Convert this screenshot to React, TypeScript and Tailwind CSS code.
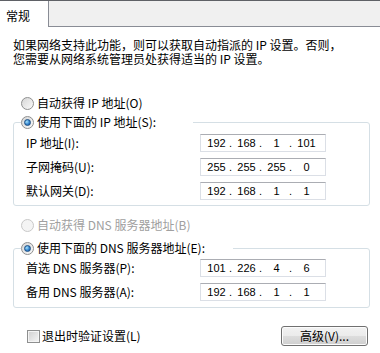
import { Fragment } from "react";

function Radio({ checked, disabled }: { checked?: boolean; disabled?: boolean }) {
  return (
    <span
      className={
        disabled
          ? "flex h-[13px] w-[13px] shrink-0 items-center justify-center rounded-full border border-[#c9c9c9] bg-[#f4f4f4]"
          : "flex h-[13px] w-[13px] shrink-0 items-center justify-center rounded-full border border-[#8e8f8f] bg-[linear-gradient(135deg,#d6d6d6,#fafafa)]"
      }
    >
      {checked && (
        <span className="h-[7px] w-[7px] rounded-full border border-[#1b4f85] bg-[radial-gradient(circle_at_35%_35%,#a6e3fb,#3585cf_55%,#1a5595)]" />
      )}
    </span>
  );
}

function IpBox({ parts }: { parts: string[] }) {
  return (
    <div className="flex h-[18px] w-[126px] items-center border border-[#dbdfe6] border-t-[#abadb3] bg-white pl-[3px] font-['Liberation_Sans',sans-serif] text-[11px] leading-none">
      {parts.map((p, i) => (
        <Fragment key={i}>
          {i > 0 && <span className="w-[5px]">.</span>}
          <span className="w-[25px] text-center">{p}</span>
        </Fragment>
      ))}
    </div>
  );
}

function Row({ label, parts }: { label: string; parts: string[] }) {
  return (
    <div className="flex h-[18px] items-center">
      <span className="w-[174px]">{label}</span>
      <IpBox parts={parts} />
    </div>
  );
}

export default function App() {
  return (
    <div className="h-[353px] w-[380px] overflow-hidden bg-white font-['Noto_Sans_CJK_SC',sans-serif] text-[12px] text-black">
      <div className="h-px bg-[#5f6166]" />
      <div className="flex h-[26px]">
        <div className="w-[49px] border-r border-[#898c95] bg-white pl-[6px] pt-[5px] leading-[20px]">常规</div>
        <div className="flex-1 border-b border-[#898c95] bg-[#f0f0f0]" />
      </div>

      <div className="mt-[11px] pl-[13px] leading-[14px]">
        <div>如果网络支持此功能，则可以获取自动指派的 IP 设置。否则，</div>
        <div>您需要从网络系统管理员处获得适当的 IP 设置。</div>
      </div>

      <div className="mt-[29px] flex h-[16px] items-center gap-[3px] pl-[21px]">
        <Radio />
        <span>自动获得 IP 地址(O)</span>
      </div>

      <fieldset className="ml-[13px] mt-[3px] w-[357px] rounded-[3px] border border-[#d5dfe5]">
        <legend className="ml-[7px] w-[172px]">
          <div className="flex h-[16px] items-center gap-[3px]">
            <Radio checked />
            <span>使用下面的 IP 地址(S):</span>
          </div>
        </legend>
        <div className="flex flex-col gap-[6px] pb-[5px] pl-[12px] pt-[4px]">
          <Row label="IP 地址(I):" parts={["192", "168", "1", "101"]} />
          <Row label="子网掩码(U):" parts={["255", "255", "255", "0"]} />
          <Row label="默认网关(D):" parts={["192", "168", "1", "1"]} />
        </div>
      </fieldset>

      <div className="mt-[11px] flex h-[16px] items-center gap-[3px] pl-[21px] text-[#a0a0a0]">
        <Radio disabled />
        <span>自动获得 DNS 服务器地址(B)</span>
      </div>

      <fieldset className="ml-[13px] mt-[7px] w-[357px] rounded-[3px] border border-[#d5dfe5]">
        <legend className="ml-[7px] w-[212px]">
          <div className="flex h-[16px] items-center gap-[3px]">
            <Radio checked />
            <span>使用下面的 DNS 服务器地址(E):</span>
          </div>
        </legend>
        <div className="flex flex-col gap-[6px] pb-[6px] pl-[12px] pt-[3px]">
          <Row label="首选 DNS 服务器(P):" parts={["101", "226", "4", "6"]} />
          <Row label="备用 DNS 服务器(A):" parts={["192", "168", "1", "1"]} />
        </div>
      </fieldset>

      <div className="mt-[18px] flex h-[20px] items-center justify-between pl-[27px] pr-[12px]">
        <div className="flex items-center gap-[2px]">
          <span className="h-[13px] w-[13px] border border-[#8e8f8f] bg-[linear-gradient(135deg,#cfcfcf,#f6f6f6)] shadow-[inset_0_0_0_1px_#f4f4f4]" />
          <span>退出时验证设置(L)</span>
        </div>
        <button className="h-[20px] w-[87px] rounded-[3px] border border-[#707070] bg-[linear-gradient(#f2f2f2_0%,#ebebeb_50%,#dddddd_51%,#cfcfcf_100%)] text-[12px] leading-none shadow-[inset_0_0_0_1px_#fcfcfc]">
          高级(V)...
        </button>
      </div>
    </div>
  );
}
